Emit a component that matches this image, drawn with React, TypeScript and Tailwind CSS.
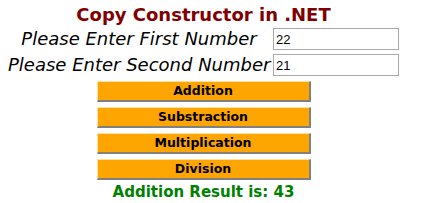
import { useState } from "react";

const ops = ["Addition", "Substraction", "Multiplication", "Division"];

export default function App() {
  const [first, setFirst] = useState("22");
  const [second, setSecond] = useState("21");

  return (
    <div className="w-[424px] h-[203px] bg-white font-['DejaVu_Sans',Verdana,sans-serif]">
      <div className="w-[391px] ml-[8px] flex flex-col items-center">
        {/* Title */}
        <h1 className="mt-[4px] text-[18px] leading-[22px] font-bold text-[#800000]">
          Copy Constructor in .NET
        </h1>

        {/* Inputs */}
        <div className="mt-[2px] grid grid-cols-[262px_126px] gap-x-[3px] gap-y-[4px] items-center">
          <span className="text-center italic text-[18px] leading-[22px] text-black">
            Please Enter First Number
          </span>
          <input
            value={first}
            onChange={(e) => setFirst(e.target.value)}
            className="h-[22px] w-[126px] border border-[#a9a9a9] px-[2px] text-[13px] font-['Liberation_Sans',Arial,sans-serif] outline-none"
          />
          <span className="text-center italic text-[18px] leading-[22px] text-black whitespace-nowrap">
            Please Enter Second Number
          </span>
          <input
            value={second}
            onChange={(e) => setSecond(e.target.value)}
            className="h-[22px] w-[126px] border border-[#a9a9a9] px-[2px] text-[13px] font-['Liberation_Sans',Arial,sans-serif] outline-none"
          />
        </div>

        {/* Buttons */}
        <div className="mt-[5px] flex flex-col gap-[5px]">
          {ops.map((op) => (
            <button
              key={op}
              className="w-[214px] h-[21px] bg-[#ffa500] border-t border-l border-t-[#ffe0a0] border-l-[#ffe0a0] border-b-2 border-r-2 border-b-[#808080] border-r-[#808080] text-[12.5px] leading-[18px] font-bold text-black"
            >
              {op}
            </button>
          ))}
        </div>

        {/* Result */}
        <p className="mt-[1px] text-[15px] leading-[22px] font-bold text-[#008000]">
          Addition Result is: 43
        </p>
      </div>
    </div>
  );
}
